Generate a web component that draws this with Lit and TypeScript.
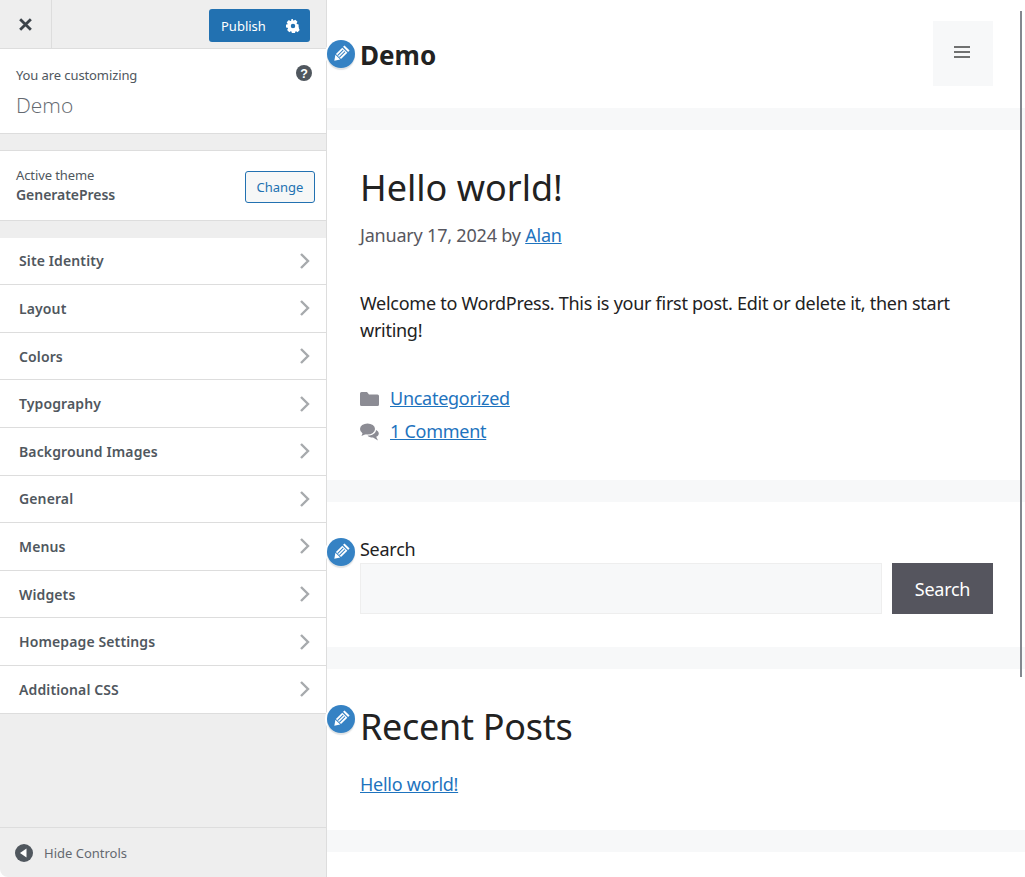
import {customElement} from "lit/decorators.js";
import {css, html, LitElement} from "lit";

const sections = [
    "Site Identity", "Layout", "Colors", "Typography", "Background Images",
    "General", "Menus", "Widgets", "Homepage Settings", "Additional CSS",
];

const pencil = html`<svg viewBox="0 0 20 20"><g transform="rotate(45 10 10)"><path fill="#fff" d="M6 0.500h8v2.300H6zM6 4h8v10H6zM6.200 15h7.600L10 20.500z"/><path stroke="#3582c4" stroke-width="1.100" d="M8.600 5v9M11.400 5v9"/></g></svg>`;

@customElement("app-root")
export class AppRoot extends LitElement {
    static styles = css`
        :host {
            display: grid;
            grid-template-columns: 327px 1fr;
            height: 877px;
            overflow: hidden;
            font-family: "Noto Sans", "Open Sans", sans-serif;
            position: relative;
            background: #fff;
        }

        /* controls pane */
        .pane {
            display: flex;
            flex-direction: column;
            background: #eee;
            border-right: 1px solid #ddd;
            height: 877px;
            border-bottom-left-radius: 8px;
            color: #50575e;
        }
        .topbar {
            display: flex;
            align-items: center;
            justify-content: space-between;
            height: 48px;
            border-bottom: 1px solid #ddd;
            flex: none;
        }
        .close {
            width: 51px;
            height: 48px;
            border-right: 1px solid #ddd;
            display: flex;
            align-items: center;
            justify-content: center;
        }
        .publish {
            width: 101px;
            height: 33px;
            margin-right: 16px;
            margin-top: 2px;
            background: #2271b1;
            border-radius: 3px;
            color: #fff;
            font-size: 13px;
            display: flex;
            align-items: center;
            justify-content: space-between;
            padding: 1px 10px 0 12px;
            box-sizing: border-box;
        }
        .info {
            background: #fff;
            height: 84px;
            border-bottom: 1px solid #ddd;
            padding: 0 11px 0 16px;
            position: relative;
            flex: none;
        }
        .info .small {
            font-size: 13px;
            line-height: 18px;
            padding-top: 17px;
            letter-spacing: -.1px;
        }
        .info .site {
            font-family: "Open Sans", "Noto Sans", sans-serif;
            font-size: 21px;
            font-weight: 300;
            line-height: 28px;
            margin-top: 7px;
            color: #646970;
        }
        .help {
            position: absolute;
            right: 14px;
            top: 16px;
        }
        .theme {
            margin-top: 16px;
            background: #fff;
            height: 69px;
            border-top: 1px solid #ddd;
            border-bottom: 1px solid #ddd;
            display: flex;
            align-items: center;
            justify-content: space-between;
            padding: 0 11px 0 16px;
            flex: none;
        }
        .theme .label {
            font-size: 13px;
            line-height: 19px;
            letter-spacing: -.1px;
        }
        .theme strong {
            display: block;
            font-size: 14px;
            line-height: 20px;
            font-weight: 600;
            letter-spacing: -.05px;
        }
        .change {
            width: 70px;
            height: 32px;
            box-sizing: border-box;
            border: 1px solid #2271b1;
            border-radius: 3px;
            background: #f6f7f7;
            color: #2271b1;
            font-size: 13px;
            display: flex;
            align-items: center;
            justify-content: center;
            margin-top: 3px;
        }
        .sections {
            margin-top: 16.600px;
            display: flex;
            flex-direction: column;
            flex: none;
        }
        .section {
            height: 47.600px;
            box-sizing: border-box;
            background: #fff;
            border-bottom: 1px solid #ddd;
            display: flex;
            align-items: center;
            justify-content: space-between;
            padding: 0 15px 0 19px;
            font-size: 14px;
            font-weight: 600;
            letter-spacing: .12px;
        }
        .spacer {
            flex: 1;
        }
        .footer {
            height: 49px;
            border-top: 1px solid #ddd;
            display: flex;
            align-items: center;
            gap: 11px;
            padding-left: 15px;
            font-size: 13px;
            color: #646970;
            flex: none;
        }

        /* site preview */
        .preview {
            background: #f7f8f9;
            display: flex;
            flex-direction: column;
            gap: 22px;
            color: #222;
            font-size: 18px;
            line-height: 27px;
            letter-spacing: -.27px;
            min-width: 0;
        }
        .card {
            background: #fff;
            padding: 0 32px 0 33px;
            flex: none;
        }
        .masthead {
            height: 108px;
            display: flex;
            justify-content: space-between;
            padding-top: 21px;
            box-sizing: border-box;
        }
        .title {
            font-size: 26px;
            font-weight: 700;
            line-height: 30px;
            margin-top: 19px;
            letter-spacing: 0;
        }
        .toggle {
            width: 60px;
            height: 65px;
            box-sizing: border-box;
            padding: 0 2px 3px 0;
            background: #f7f8f9;
            display: flex;
            align-items: center;
            justify-content: center;
        }
        .post {
            height: 350px;
            box-sizing: border-box;
            padding-top: 33px;
        }
        h1, h2 {
            margin: 0;
            font-weight: 400;
            font-size: 36px;
            line-height: 50px;
            letter-spacing: -.3px;
        }
        h1 {
            letter-spacing: 0;
        }
        .byline {
            margin-top: 9px;
            color: #575760;
            letter-spacing: -.2px;
        }
        .post p {
            margin: 41px 0 0;
            color: #222;
        }
        a {
            color: #1e73be;
            text-decoration: underline;
        }
        .meta {
            margin-top: 41px;
            display: flex;
            flex-direction: column;
            gap: 6px;
        }
        .meta div {
            display: flex;
            align-items: center;
            gap: 11px;
        }
        .search-box {
            height: 145px;
            box-sizing: border-box;
            padding-top: 34px;
        }
        .search-box label {
            display: block;
            line-height: 27px;
        }
        .search-row {
            display: flex;
            gap: 10px;
        }
        .search-row .field {
            flex: 1;
            height: 51px;
            box-sizing: border-box;
            background: #f7f8f9;
            border: 1px solid #eee;
        }
        .search-row .btn {
            width: 101px;
            height: 51px;
            box-sizing: border-box;
            padding-top: 2px;
            background: #55555e;
            color: #fff;
            display: flex;
            align-items: center;
            justify-content: center;
        }
        .recent {
            height: 161px;
            box-sizing: border-box;
            padding-top: 33px;
        }
        .recent .link {
            margin-top: 19px;
        }
        .tail {
            flex: 1;
        }

        /* overlays */
        .edit {
            position: absolute;
            left: 327px;
            width: 28px;
            height: 28px;
            border-radius: 50%;
            background: #3582c4;
            box-shadow: 0 2px 1px rgba(46, 68, 83, .15), 0 0 0 2px #fff;
            display: flex;
            align-items: center;
            justify-content: center;
        }
        .edit svg {
            width: 18px;
            height: 18px;
        }
        .scrollbar {
            position: absolute;
            left: 1020px;
            top: 11px;
            width: 2px;
            height: 666px;
            background: #84888f;
        }
    `;

    protected render() {
        return html`
            <aside class="pane">
                <div class="topbar">
                    <div class="close">
                        <svg width="15" height="15" viewBox="0 0 14 14"><path d="M2 2l10 10M12 2L2 12" stroke="#3c434a" stroke-width="2.600" fill="none"/></svg>
                    </div>
                    <div class="publish">
                        <span>Publish</span>
                        <svg width="14" height="14" viewBox="0 0 20 20"><path fill="#fff" fill-rule="evenodd" d="M18 12.200v-4.400l-2.400-.5a6 6 0 0 0-.5-1.200l1.300-2-3.100-3.100-2 1.300a6 6 0 0 0-1.200-.5L9.800 0 7.800 0l-.5 2.400 -.1 0a6 6 0 0 0-1.100.5l-2-1.300L1 4.700l1.300 2a6 6 0 0 0-.5 1.100L0 8v4l2.400.5c.1.400.3.800.5 1.200l-1.300 2 3.100 3.100 2-1.300c.4.200.8.400 1.200.5l.5 2.400h4.400l.5-2.400c.4-.1.800-.3 1.200-.5l2 1.300 3.100-3.100-1.300-2c.2-.4.400-.8.500-1.200zM10 13.200a3.200 3.200 0 1 1 0-6.400 3.200 3.200 0 0 1 0 6.400z"/></svg>
                    </div>
                </div>
                <div class="info">
                    <div class="small">You are customizing</div>
                    <div class="site">Demo</div>
                    <svg class="help" width="16" height="16" viewBox="0 0 16 16"><circle cx="8" cy="8" r="8" fill="#50575e"/><text x="8" y="12.500" text-anchor="middle" font-size="12.500" font-weight="700" fill="#fff" font-family="Liberation Sans, sans-serif">?</text></svg>
                </div>
                <div class="theme">
                    <div class="label">Active theme<strong>GeneratePress</strong></div>
                    <div class="change">Change</div>
                </div>
                <div class="sections">
                    ${sections.map(name => html`
                        <div class="section">
                            <span>${name}</span>
                            <svg width="12" height="18" viewBox="0 0 12 18"><path d="M2 2l7 7-7 7" fill="none" stroke="#a7aaad" stroke-width="2.400"/></svg>
                        </div>
                    `)}
                </div>
                <div class="spacer"></div>
                <div class="footer">
                    <svg width="18" height="18" viewBox="0 0 18 18"><circle cx="9" cy="9" r="9" fill="#50575e"/><path d="M11.500 4.500v9L5 9z" fill="#fff"/></svg>
                    <span>Hide Controls</span>
                </div>
            </aside>

            <main class="preview">
                <header class="card masthead">
                    <div class="title">Demo</div>
                    <div class="toggle">
                        <svg width="16" height="12" viewBox="0 0 16 12"><path d="M0 1h16M0 6h16M0 11h16" stroke="#444" stroke-width="1.600"/></svg>
                    </div>
                </header>
                <article class="card post">
                    <h1>Hello world!</h1>
                    <div class="byline">January 17, 2024 by <a>Alan</a></div>
                    <p>Welcome to WordPress. This is your first post. Edit or delete it, then start writing!</p>
                    <div class="meta">
                        <div>
                            <svg width="19" height="16" viewBox="0 0 19 16"><path fill="#8c8c94" d="M1.500 1h5.500l2 2.500h8.500q1.500 0 1.500 1.500v8.500q0 1.500-1.500 1.500H1.500Q0 15 0 13.500v-11Q0 1 1.500 1z"/></svg>
                            <a>Uncategorized</a>
                        </div>
                        <div>
                            <svg width="19" height="18" viewBox="0 0 19 18"><ellipse cx="7.500" cy="6" rx="7.500" ry="5.500" fill="#8c8c94"/><path fill="#8c8c94" d="M3 9 1.500 13 7 10.500zM16 7c1.700.8 2.800 2 2.800 3.500 0 1.500-1 2.600-2.600 3.300l1.800 3.700-5-3c-2.500 0-4.500-.6-5.400-2 4.500 0 8.400-2 8.400-5.500z"/></svg>
                            <a>1 Comment</a>
                        </div>
                    </div>
                </article>
                <section class="card search-box">
                    <label>Search</label>
                    <div class="search-row">
                        <div class="field"></div>
                        <div class="btn">Search</div>
                    </div>
                </section>
                <section class="card recent">
                    <h2>Recent Posts</h2>
                    <div class="link"><a>Hello world!</a></div>
                </section>
                <div class="card tail"></div>
            </main>

            <div class="edit" style="top: 40px">${pencil}</div>
            <div class="edit" style="top: 538px">${pencil}</div>
            <div class="edit" style="top: 705px">${pencil}</div>
            <div class="scrollbar"></div>
        `;
    }
}
